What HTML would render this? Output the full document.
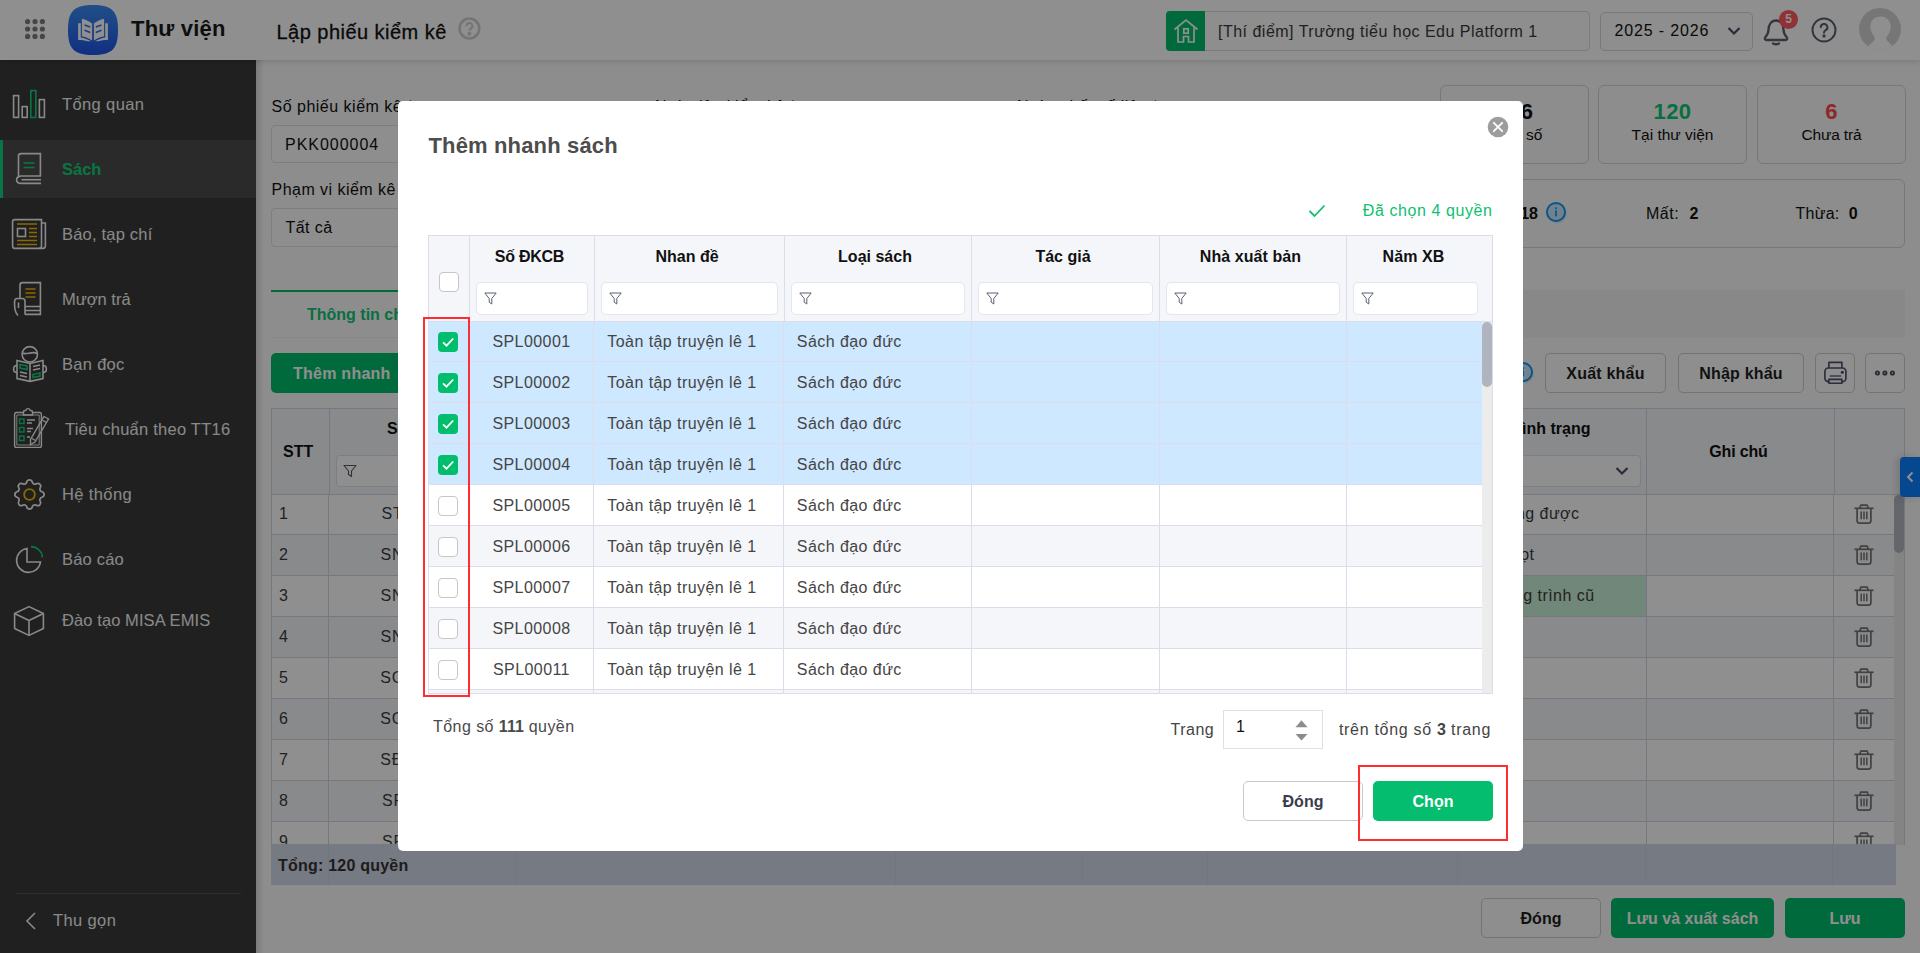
<!DOCTYPE html>
<html lang="vi">
<head>
<meta charset="utf-8">
<title>Lập phiếu kiểm kê</title>
<style>
*{box-sizing:border-box;margin:0;padding:0}
html,body{width:1920px;height:953px;overflow:hidden;background:#fff}
body{font-family:"Liberation Sans",sans-serif;font-size:16px;color:#1f1f1f;position:relative}
.abs{position:absolute}
.t{position:absolute;white-space:nowrap;line-height:20px;letter-spacing:.45px}
.b,.t b{font-weight:bold;letter-spacing:0}
#hdr{position:absolute;left:0;top:0;width:1920px;height:60px;background:#fff;box-shadow:0 2px 5px rgba(0,0,0,.12);z-index:3}
#side{position:absolute;left:0;top:60px;width:256px;height:893px;background:#3a3a3a;z-index:2}
#side .it{position:absolute;left:0;width:256px;height:58px}
#side .it.sel{background:#4c4c4c;box-shadow:inset 3px 0 0 #12d07a}
#side .lbl{position:absolute;left:62px;font-size:16.5px;color:#f4f4f4;white-space:nowrap;line-height:20px;letter-spacing:.38px}
#side svg{position:absolute}
#main{position:absolute;left:256px;top:60px;width:1664px;height:893px;background:#fbfbfb}
.inp{position:absolute;border:1px solid #e0e0e0;border-radius:4px;background:#fdfdfd}
.btn{position:absolute;border-radius:5px;text-align:center;font-weight:bold;font-size:16px;line-height:39px;height:40px;white-space:nowrap}
.btn.g{background:#03bd6d;color:#fff;line-height:41px}
.btn.w{background:#fdfdfd;border:1px solid #cdcdcd;color:#1f1f1f}
.mc{color:#454545}
#ov{position:absolute;left:0;top:0;width:1920px;height:953px;background:rgba(0,0,0,.44);z-index:10}
#modal{position:absolute;left:398px;top:101px;width:1124.500px;height:750px;background:#fff;border-radius:5px;z-index:20}
</style>
</head>
<body>
<div id="hdr"><svg class="abs" style="left:25px;top:19px" width="20" height="20" viewBox="0 0 20 20" fill="#7d7d7d"><circle cx="2.6" cy="2.6" r="2.600"/><circle cx="10" cy="2.6" r="2.600"/><circle cx="17.4" cy="2.6" r="2.600"/><circle cx="2.6" cy="10" r="2.600"/><circle cx="10" cy="10" r="2.600"/><circle cx="17.4" cy="10" r="2.600"/><circle cx="2.6" cy="17.4" r="2.600"/><circle cx="10" cy="17.4" r="2.600"/><circle cx="17.4" cy="17.4" r="2.600"/></svg><svg class="abs" style="left:68px;top:5px" width="50" height="50" viewBox="0 0 50 50"><defs><linearGradient id="lg" x1="0" y1="0" x2="0" y2="1"><stop offset="0" stop-color="#3a8df2"/><stop offset="1" stop-color="#1f55e6"/></linearGradient></defs><path d="M25 0C44 0 50 6 50 25C50 44 44 50 25 50C6 50 0 44 0 25C0 6 6 0 25 0Z" fill="url(#lg)"/><g fill="#fff"><path d="M13.900 13.800C18 14.500 21.500 16.500 24.100 18.600V35.600C21.500 33.500 18 32 13.900 31.200Z"/><path d="M36.100 13.800C32 14.500 28.500 16.500 25.900 18.600V35.600C28.500 33.500 32 32 36.100 31.200Z"/><path d="M10.100 18.300H12.800V32.400C16.500 33 20 34.200 23 36.300H19.500C17 35.400 14 35 10.100 35Z"/><path d="M39.900 18.300H37.200V32.400C33.500 33 30 34.200 27 36.300H30.500C33 35.400 36 35 39.900 35Z"/></g><g stroke="#2f74ea" stroke-width="1.700" stroke-linecap="round"><path d="M17.200 20.200L21.600 21.800M17.200 25.500L21.600 27.300M32.800 20.200L28.400 21.800M32.800 25.500L28.400 27.300"/></g></svg><div class="t b" id="h_app" style="left:131px;top:17px;font-size:22px;line-height:24px;color:#1a1a1a;letter-spacing:.2px">Thư viện</div><div class="t" id="h_title" style="left:276.500px;top:20.100px;letter-spacing:.47px;font-size:20px;line-height:24px;color:#111;-webkit-text-stroke:.3px #111">Lập phiếu kiểm kê</div><svg class="abs" style="left:457px;top:17px" width="24" height="24" viewBox="0 0 24 24" fill="none" stroke="#cfcfcf" stroke-width="2.500"><circle cx="12.400" cy="11.500" r="9.900"/><path d="M9.600 9a2.900 2.900 0 1 1 4.300 2.500c-.9.500-1.500 1.100-1.500 2.200" stroke-width="2"/><circle cx="12.400" cy="16.800" r=".7" fill="#cfcfcf"/></svg><div class="abs" style="left:1166px;top:11px;width:424px;height:40px;border:1px solid #dcdcdc;border-radius:4px;background:#fdfdfd"></div><div class="abs" style="left:1166px;top:11px;width:39px;height:40px;border-radius:4px 0 0 4px;background:#03bd6d"></div><svg class="abs" style="left:1172px;top:17px" width="28" height="28" viewBox="0 0 28 28" fill="none" stroke="#fff" stroke-width="1.700" stroke-linejoin="miter"><path d="M2.500 12.500L14 3L25.500 12.500"/><path d="M6 10.500V25H11.500V19.500H16.500V25H22V10.500"/><rect x="11.800" y="11.800" width="4.400" height="4.400"/></svg><div class="t" id="h_school" style="left:1218px;top:21.600px;letter-spacing:.49px;color:#3a3a3a">[Thí điểm] Trường tiểu học Edu Platform 1</div><div class="abs" style="left:1600px;top:12px;width:153px;height:39px;border:1px solid #d6d6d6;border-radius:5px;background:#fdfdfd"></div><div class="t" id="h_year" style="left:1614.500px;top:21.200px;letter-spacing:.86px;color:#111">2025 - 2026</div><svg class="abs" style="left:1727px;top:26px" width="14" height="10" viewBox="0 0 14 10" fill="none" stroke="#4a4f63" stroke-width="2.200"><path d="M1.500 2L7 7.500L12.500 2"/></svg><svg class="abs" style="left:1762px;top:17px" width="28" height="30" viewBox="0 0 28 30" fill="none" stroke="#5b6170" stroke-width="2.300" stroke-linecap="round" stroke-linejoin="round"><path d="M4.500 23C3 23 2.300 21.500 3.300 20.300C5.800 17.500 6.500 16 6.500 12.500C6.500 7.500 9.500 3.500 14 3.500C18.500 3.500 21.500 7.500 21.500 12.500C21.500 16 22.200 17.500 24.700 20.300C25.700 21.500 25 23 23.500 23Z"/><path d="M11 26.500Q14 28 17 26.500"/></svg><div class="abs" style="left:1779px;top:10px;width:19px;height:19px;border-radius:50%;background:#ff5a5f"></div><div class="t b" style="left:1779px;top:10px;width:19px;text-align:center;font-size:12px;line-height:19px;color:#fff">5</div><svg class="abs" style="left:1810px;top:16px" width="28" height="28" viewBox="0 0 28 28" fill="none" stroke="#5b6170" stroke-width="2"><circle cx="14" cy="14" r="11.500"/><path d="M10.800 11.300a3.300 3.300 0 1 1 4.900 2.900c-1 .6-1.700 1.300-1.700 2.500" stroke-linecap="round"/><circle cx="14" cy="20" r=".7" fill="#5b6170"/></svg><svg class="abs" style="left:1859px;top:8px" width="42" height="42" viewBox="0 0 42 42"><defs><clipPath id="av"><circle cx="21" cy="21" r="21"/></clipPath></defs><circle cx="21" cy="21" r="21" fill="#d2d2d2"/><g clip-path="url(#av)" fill="#fff"><path d="M21.500 8.400C28 8.400 31.800 13 31.800 18.600C31.800 23 29.500 26.500 27.500 29C27 30.500 27.500 32 29 33.500L34.500 39L36 44H7L8.500 39L14 33.500C15.500 32 16 30.500 15.500 29C13.500 26.500 11.300 23 11.300 18.600C11.300 13 15 8.400 21.500 8.400Z"/></g></svg></div>
<div id="side"><div class="it" style="top:15.5px"><svg style="left:12px;top:13px" width="34" height="30" viewBox="0 0 34 30" fill="none" stroke="#f4f4f4" stroke-width="1.600"><rect x="1.600" y="6.600" width="5" height="21.800"/><rect x="10.200" y="17.600" width="5" height="10.800"/><rect x="18.800" y="1.600" width="5" height="26.800" stroke="#12d07a"/><rect x="27.400" y="10.600" width="5" height="17.800"/></svg><div class="lbl" style="left:62px;top:18.5px;">Tổng quan</div></div><div class="it sel" style="top:80px"><svg style="left:15px;top:12px" width="28" height="34" viewBox="0 0 28 34" fill="none" stroke="#f4f4f4" stroke-width="1.600"><path d="M3.500 26V4C3.500 2.500 4.500 1.600 6 1.600H25.400V24H6.500C3 24 1.600 25.500 1.600 27.700C1.600 30 3 31.400 6.500 31.400H26"/><path d="M26 27.700H6.500"/><path d="M8.500 11H19.500M8.500 15.500H19.500" stroke="#12d07a"/></svg><div class="lbl" style="left:62px;top:19px;color:#12d07a;font-weight:bold;letter-spacing:0;">Sách</div></div><div class="it" style="top:145px"><svg style="left:11px;top:13px" width="36" height="32" viewBox="0 0 36 32" fill="none" stroke="#f4f4f4" stroke-width="1.600"><path d="M3.500 1.600H30.500V28C30.500 29.500 29.500 30.400 28 30.400H4C2.500 30.400 1.600 29.500 1.600 28V3.500C1.600 2.300 2.300 1.600 3.500 1.600Z"/><path d="M30.500 5H34.400V27.500C34.400 29.500 33.300 30.400 32 30.400H28"/><rect x="6.500" y="10.500" width="8" height="8"/><path d="M6 6H26M18 10.500H26M18 14.500H26M18 18.500H26M6 22.500H26M6 26.500H26" stroke="#f5bd00" stroke-width="1.500"/></svg><div class="lbl" style="left:62px;top:19px;letter-spacing:0.2px;">Báo, tạp chí</div></div><div class="it" style="top:210px"><svg style="left:13px;top:11px" width="30" height="36" viewBox="0 0 30 36" fill="none" stroke="#f4f4f4" stroke-width="1.600"><path d="M7 17V4C7 2.500 8 1.600 9.500 1.600H27.400V33.400H12"/><path d="M12 25.500H27.400M12 29.500H27.400"/><path d="M5 34.500C2.500 32 1.600 29 1.600 24V20.500C1.600 18.500 2.800 17.500 4.300 17.500H9.500C11.500 17.500 12 19 12 20.500V33.400"/><path d="M5.500 21.500V27"/><path d="M12.500 8H22.500M12.500 12H22.500M12.500 16H22.500" stroke="#f5bd00" stroke-width="1.500"/></svg><div class="lbl" style="left:62px;top:19px;letter-spacing:0px;">Mượn trả</div></div><div class="it" style="top:275px"><svg style="left:12px;top:10px" width="36" height="38" viewBox="0 0 36 38" fill="none" stroke="#f4f4f4" stroke-width="1.600"><circle cx="17.800" cy="9.300" r="7.700"/><path d="M10.500 8C14 10.500 20 5.500 25.300 8.500"/><path d="M5 15.500L18 18.500L31 15.500V33.500L18 36.400L5 33.500Z"/><path d="M18 18.500V36.400"/><path d="M5 20.500C2.500 20.500 1.600 22 1.600 24C1.600 26 2.500 27.500 5 27.500M31 20.500C33.500 20.500 34.400 22 34.400 24C34.400 26 33.500 27.500 31 27.500"/><path d="M8 19.500L15 21V24.500L8 23ZM21 29.500L28 28V31L21 32.500Z" stroke="#12d07a"/><path d="M8 27L15 28.500M8 30.500L15 32M21 21.500L28 20M21 25L28 23.500"/></svg><div class="lbl" style="left:62px;top:19px;letter-spacing:0.3px;">Bạn đọc</div></div><div class="it" style="top:340px"><svg style="left:13px;top:7px" width="38" height="42" viewBox="0 0 38 42" fill="none" stroke="#f4f4f4" stroke-width="1.400"><path d="M11 5.500H3.500C2.300 5.500 1.600 6.200 1.600 7.500V38.500C1.600 39.700 2.300 40.400 3.500 40.400H26.500C27.700 40.400 28.400 39.700 28.400 38.500V7.500C28.400 6.200 27.700 5.500 26.500 5.500H19"/><path d="M3.800 8H26.200V38H3.800Z" stroke-width=".9"/><path d="M10.500 8V5C10.500 4 11 3.500 12 3.500H12.800C13 2.300 13.800 1.600 15 1.600C16.200 1.600 17 2.300 17.200 3.500H18C19 3.500 19.500 4 19.500 5V8Z"/><rect x="6.500" y="12" width="4.500" height="4.500" stroke="#12d07a"/><rect x="6.500" y="20.500" width="4.500" height="4.500" stroke="#12d07a"/><rect x="6.500" y="29" width="4.500" height="4.500" stroke="#12d07a"/><path d="M14 13H22M14 16H19M14 21.500H20M14 24.500H18M14 30H17"/><path d="M31 9.500L35.500 12L22 35L17.500 37.500L17.500 32.500Z"/><path d="M29 13L33.500 15.500M19 31.500L22.500 33.500"/></svg><div class="lbl" style="left:65px;top:19px;letter-spacing:0.24px;">Tiêu chuẩn theo TT16</div></div><div class="it" style="top:405.5px"><svg style="left:9.500px;top:9.500px" width="39" height="39" viewBox="0 0 24 24" fill="none" stroke="#f4f4f4" stroke-width="1.050" stroke-linejoin="round"><path d="M10.325 4.317c.426-1.756 2.924-1.756 3.350 0a1.724 1.724 0 0 0 2.573 1.066c1.543-.94 3.310.826 2.370 2.370a1.724 1.724 0 0 0 1.065 2.572c1.756.426 1.756 2.924 0 3.350a1.724 1.724 0 0 0-1.066 2.573c.94 1.543-.826 3.310-2.370 2.370a1.724 1.724 0 0 0-2.572 1.065c-.426 1.756-2.924 1.756-3.350 0a1.724 1.724 0 0 0-2.573-1.066c-1.543.94-3.310-.826-2.370-2.370a1.724 1.724 0 0 0-1.065-2.572c-1.756-.426-1.756-2.924 0-3.350a1.724 1.724 0 0 0 1.066-2.573c-.94-1.543.826-3.310 2.370-2.370.996.608 2.296.070 2.572-1.065z"/><circle cx="12" cy="12" r="3.300" stroke="#f5bd00" stroke-width="1.100"/></svg><div class="lbl" style="left:62px;top:18px;">Hệ thống</div></div><div class="it" style="top:470.5px"><svg style="left:14px;top:14px" width="30" height="30" viewBox="0 0 30 30" fill="none" stroke="#f4f4f4" stroke-width="1.600"><path d="M13 3.500A12 12 0 1 0 26.500 17H13Z"/><path d="M17 1.600A11.500 11.500 0 0 1 28.400 12.500" stroke="#12d07a"/></svg><div class="lbl" style="left:62px;top:18px;letter-spacing:0.2px;">Báo cáo</div></div><div class="it" style="top:531.5px"><svg style="left:13px;top:13px" width="32" height="32" viewBox="0 0 32 32" fill="none" stroke="#f4f4f4" stroke-width="1.600" stroke-linejoin="round"><path d="M16 1.600L30.400 8.500V23.500L16 30.400L1.600 23.500V8.500Z"/><path d="M1.600 8.500L16 15.500L30.400 8.500M16 15.500V30.400"/></svg><div class="lbl" style="left:62px;top:18px;letter-spacing:0.09px;">Đào tạo MISA EMIS</div></div><div class="abs" style="left:15px;top:833px;width:226px;height:1px;background:#4a545c"></div><svg style="left:24px;top:851px" width="14" height="20" viewBox="0 0 14 20" fill="none" stroke="#f4f4f4" stroke-width="1.600"><path d="M11 2L3 10L11 18"/></svg><div class="lbl" style="left:53px;top:850px">Thu gọn</div></div>
<div id="main"><div class="abs" style="left:0;top:0;width:8px;height:893px;background:linear-gradient(90deg,rgba(0,0,0,.13),rgba(0,0,0,0))"></div><div class="t" id="m_l1" style="left:15.5px;top:37px;color:#111;letter-spacing:.5px">Số phiếu kiểm kê <span style="color:#e00">*</span></div><div class="inp" style="left:15px;top:64.5px;width:340px;height:38px"></div><div class="t" id="m_v1" style="left:29px;top:74.7px;color:#111;letter-spacing:.97px">PKK000004</div><div class="t" id="m_l2" style="left:15.5px;top:119.5px;color:#111;letter-spacing:.47px">Phạm vi kiểm kê</div><div class="inp" style="left:15px;top:147.5px;width:340px;height:39px"></div><div class="t" id="m_v2" style="left:29.5px;top:157.7px;color:#111;letter-spacing:.45px">Tất cả</div><div class="t" style="left:399px;top:37px;color:#111">Ngày lập kiểm kê <span style="color:#e00">*</span></div><div class="t" style="left:761px;top:37px;color:#111">Ngày chốt số liệu <span style="color:#e00">*</span></div><div class="inp" style="left:1184px;top:25px;width:149px;height:79px;background:transparent;border-color:#d4d4d4;border-radius:6px"></div><div class="t b" style="left:1184px;top:40.4px;width:149px;text-align:center;font-size:22px;line-height:24px;color:#111;letter-spacing:.5px">126</div><div class="t" style="left:1184px;top:65px;width:149px;text-align:center;font-size:15.500px;color:#111;letter-spacing:0px">Tổng số</div><div class="inp" style="left:1342px;top:25px;width:149px;height:79px;background:transparent;border-color:#d4d4d4;border-radius:6px"></div><div class="t b" style="left:1342px;top:40.4px;width:149px;text-align:center;font-size:22px;line-height:24px;color:#0fc775;letter-spacing:.5px">120</div><div class="t" style="left:1342px;top:65px;width:149px;text-align:center;font-size:15.500px;color:#111;letter-spacing:0px">Tại thư viện</div><div class="inp" style="left:1501px;top:25px;width:149px;height:79px;background:transparent;border-color:#d4d4d4;border-radius:6px"></div><div class="t b" style="left:1501px;top:40.4px;width:149px;text-align:center;font-size:22px;line-height:24px;color:#ff474c;letter-spacing:.5px">6</div><div class="t" style="left:1501px;top:65px;width:149px;text-align:center;font-size:15.500px;color:#111;letter-spacing:-0.15px">Chưa trả</div><div class="inp" style="left:1184px;top:119px;width:465px;height:69px;background:transparent;border-color:#d4d4d4;border-radius:6px"></div><div class="t" id="m_s1" style="right:382px;top:144px;color:#111">Hư hỏng: <b>18</b></div><svg class="abs" style="left:1290px;top:142.3px" width="22" height="22" viewBox="0 0 22 22"><circle cx="11.200" cy="11.800" r="9.500" fill="#5aa9e6" opacity=".22"/><circle cx="10" cy="10" r="9.050" fill="#c8e6ff" stroke="#0f96f0" stroke-width="1.900"/><rect x="9.200" y="8.400" width="1.700" height="6" fill="#0f96f0"/><rect x="9.200" y="5.300" width="1.700" height="1.800" fill="#0f96f0"/></svg><div class="t" id="m_s2" style="left:1390px;top:144px;color:#111;letter-spacing:.5px">Mất:</div><div class="t b" style="left:1433.5px;top:144px;color:#111;letter-spacing:.5px">2</div><div class="t" id="m_s3" style="left:1539.4px;top:144px;color:#111;letter-spacing:.3px">Thừa:</div><div class="t b" style="left:1592.8px;top:144px;color:#111;letter-spacing:.5px">0</div><div class="abs" style="left:15px;top:277px;width:1634px;height:1px;background:#f0f0f0"></div><div class="abs" style="left:264px;top:230px;width:1385px;height:47.500px;background:#f3f3f3"></div><div class="abs" style="left:15px;top:230px;width:249px;height:2px;background:#03bd6d"></div><div class="t b" id="m_tab" style="left:51px;top:245px;color:#0fc775">Thông tin chi tiết</div><div class="btn g" id="m_b1" style="left:15px;top:293px;width:180px;text-align:left;padding-left:22px;letter-spacing:.25px">Thêm nhanh</div><svg class="abs" style="left:1257.2px;top:301.7px" width="22" height="22" viewBox="0 0 22 22"><circle cx="11.200" cy="11.800" r="9.500" fill="#5aa9e6" opacity=".22"/><circle cx="10" cy="10" r="9.050" fill="#c8e6ff" stroke="#0f96f0" stroke-width="1.900"/><rect x="9.200" y="8.400" width="1.700" height="6" fill="#0f96f0"/><rect x="9.200" y="5.300" width="1.700" height="1.800" fill="#0f96f0"/></svg><div class="btn w" id="m_b2" style="left:1289px;top:293px;width:121px;letter-spacing:.2px">Xuất khẩu</div><div class="btn w" id="m_b3" style="left:1422px;top:293px;width:126px;letter-spacing:.2px">Nhập khẩu</div><div class="btn w" style="left:1559px;top:293px;width:40px"></div><svg class="abs" style="left:1567px;top:300.5px" width="25" height="25" viewBox="0 0 25 25" fill="none" stroke="#4d506e" stroke-width="1.650" stroke-linejoin="round"><path d="M5.900 7V1.400H18.900V7"/><rect x="1.900" y="7" width="21" height="13.600" rx="3.400"/><path d="M6.800 15H18.200" stroke-width="1.300"/><path d="M5.900 22.200V18.300H18.900V22.200Z" fill="#fbfbfb"/><circle cx="19.300" cy="11.300" r="1.500" fill="#45486a" stroke="none"/></svg><div class="btn w" style="left:1609px;top:293px;width:40px"></div><svg class="abs" style="left:1618px;top:308.9px" width="22" height="8" viewBox="0 0 22 8" fill="none" stroke="#4a4c5e" stroke-width="1.800"><circle cx="3.400" cy="4" r="1.650"/><circle cx="10.900" cy="4" r="1.650"/><circle cx="18.400" cy="4" r="1.650"/></svg><div class="abs" id="bgtbl" style="left:15px;top:348px;width:1634px;height:437px;overflow:hidden;border:1px solid #d2d4e3;border-bottom:none;background:#fff"><div class="abs" style="left:0;top:85px;width:1622px;height:41px;background:#fff;border-bottom:1px solid #d2d4e3"></div><div class="t" style="left:7px;top:94.5px;color:#3c3c3c">1</div><div class="t" style="left:57px;width:187px;text-align:center;top:94.5px;color:#3c3c3c;letter-spacing:.8px">STK00001</div><div class="t" style="right:324.5px;top:94.5px;color:#3c3c3c" id="st0">Sử dụng được</div><svg class="abs" style="left:1582px;top:94.8px" width="20" height="20" viewBox="0 0 20 20" fill="none" stroke="#767676" stroke-width="1.700" stroke-linejoin="round"><path d="M.400 4.300H19.600"/><path d="M5.800 4.300L6.800 1.100H13.200L14.200 4.300"/><path d="M3.100 4.300V16.400C3.100 18.300 4 19.100 5.700 19.100H14.300C16 19.100 16.900 18.300 16.900 16.400V4.300"/><path d="M7.200 7.600V15.200M10 7.600V15.200M12.800 7.600V15.200" stroke-width="1.500"/></svg><div class="abs" style="left:0;top:126px;width:1622px;height:41px;background:#f5f6fa;border-bottom:1px solid #d2d4e3"></div><div class="t" style="left:7px;top:135.5px;color:#3c3c3c">2</div><div class="t" style="left:57px;width:187px;text-align:center;top:135.5px;color:#3c3c3c;letter-spacing:.8px">SNV00001</div><div class="t" style="right:369.5px;top:135.5px;color:#3c3c3c" id="st1">Mối mọt</div><svg class="abs" style="left:1582px;top:135.8px" width="20" height="20" viewBox="0 0 20 20" fill="none" stroke="#767676" stroke-width="1.700" stroke-linejoin="round"><path d="M.400 4.300H19.600"/><path d="M5.800 4.300L6.800 1.100H13.200L14.200 4.300"/><path d="M3.100 4.300V16.400C3.100 18.300 4 19.100 5.700 19.100H14.300C16 19.100 16.900 18.300 16.900 16.400V4.300"/><path d="M7.200 7.600V15.200M10 7.600V15.200M12.800 7.600V15.200" stroke-width="1.500"/></svg><div class="abs" style="left:0;top:167px;width:1622px;height:41px;background:#fff;border-bottom:1px solid #d2d4e3"></div><div class="abs" style="left:1187px;top:167px;width:188px;height:40px;background:#c9f0d8"></div><div class="t" style="left:7px;top:176.5px;color:#3c3c3c">3</div><div class="t" style="left:57px;width:187px;text-align:center;top:176.5px;color:#3c3c3c;letter-spacing:.8px">SNV00002</div><div class="t" style="right:309.5px;top:176.5px;color:#3c3c3c" id="st2">Chương trình cũ</div><svg class="abs" style="left:1582px;top:176.8px" width="20" height="20" viewBox="0 0 20 20" fill="none" stroke="#767676" stroke-width="1.700" stroke-linejoin="round"><path d="M.400 4.300H19.600"/><path d="M5.800 4.300L6.800 1.100H13.200L14.200 4.300"/><path d="M3.100 4.300V16.400C3.100 18.300 4 19.100 5.700 19.100H14.300C16 19.100 16.900 18.300 16.900 16.400V4.300"/><path d="M7.200 7.600V15.200M10 7.600V15.200M12.800 7.600V15.200" stroke-width="1.500"/></svg><div class="abs" style="left:0;top:208px;width:1622px;height:41px;background:#f5f6fa;border-bottom:1px solid #d2d4e3"></div><div class="t" style="left:7px;top:217.5px;color:#3c3c3c">4</div><div class="t" style="left:57px;width:187px;text-align:center;top:217.5px;color:#3c3c3c;letter-spacing:.8px">SNV00003</div><svg class="abs" style="left:1582px;top:217.8px" width="20" height="20" viewBox="0 0 20 20" fill="none" stroke="#767676" stroke-width="1.700" stroke-linejoin="round"><path d="M.400 4.300H19.600"/><path d="M5.800 4.300L6.800 1.100H13.200L14.200 4.300"/><path d="M3.100 4.300V16.400C3.100 18.300 4 19.100 5.700 19.100H14.300C16 19.100 16.900 18.300 16.900 16.400V4.300"/><path d="M7.200 7.600V15.200M10 7.600V15.200M12.800 7.600V15.200" stroke-width="1.500"/></svg><div class="abs" style="left:0;top:249px;width:1622px;height:41px;background:#fff;border-bottom:1px solid #d2d4e3"></div><div class="t" style="left:7px;top:258.5px;color:#3c3c3c">5</div><div class="t" style="left:57px;width:187px;text-align:center;top:258.5px;color:#3c3c3c;letter-spacing:.8px">SGK00001</div><svg class="abs" style="left:1582px;top:258.8px" width="20" height="20" viewBox="0 0 20 20" fill="none" stroke="#767676" stroke-width="1.700" stroke-linejoin="round"><path d="M.400 4.300H19.600"/><path d="M5.800 4.300L6.800 1.100H13.200L14.200 4.300"/><path d="M3.100 4.300V16.400C3.100 18.300 4 19.100 5.700 19.100H14.300C16 19.100 16.900 18.300 16.900 16.400V4.300"/><path d="M7.200 7.600V15.200M10 7.600V15.200M12.800 7.600V15.200" stroke-width="1.500"/></svg><div class="abs" style="left:0;top:290px;width:1622px;height:41px;background:#f5f6fa;border-bottom:1px solid #d2d4e3"></div><div class="t" style="left:7px;top:299.5px;color:#3c3c3c">6</div><div class="t" style="left:57px;width:187px;text-align:center;top:299.5px;color:#3c3c3c;letter-spacing:.8px">SGK00002</div><svg class="abs" style="left:1582px;top:299.8px" width="20" height="20" viewBox="0 0 20 20" fill="none" stroke="#767676" stroke-width="1.700" stroke-linejoin="round"><path d="M.400 4.300H19.600"/><path d="M5.800 4.300L6.800 1.100H13.200L14.200 4.300"/><path d="M3.100 4.300V16.400C3.100 18.300 4 19.100 5.700 19.100H14.300C16 19.100 16.900 18.300 16.900 16.400V4.300"/><path d="M7.200 7.600V15.200M10 7.600V15.200M12.800 7.600V15.200" stroke-width="1.500"/></svg><div class="abs" style="left:0;top:331px;width:1622px;height:41px;background:#fff;border-bottom:1px solid #d2d4e3"></div><div class="t" style="left:7px;top:340.5px;color:#3c3c3c">7</div><div class="t" style="left:57px;width:187px;text-align:center;top:340.5px;color:#3c3c3c;letter-spacing:.8px">SĐĐ00001</div><svg class="abs" style="left:1582px;top:340.8px" width="20" height="20" viewBox="0 0 20 20" fill="none" stroke="#767676" stroke-width="1.700" stroke-linejoin="round"><path d="M.400 4.300H19.600"/><path d="M5.800 4.300L6.800 1.100H13.200L14.200 4.300"/><path d="M3.100 4.300V16.400C3.100 18.300 4 19.100 5.700 19.100H14.300C16 19.100 16.900 18.300 16.900 16.400V4.300"/><path d="M7.200 7.600V15.200M10 7.600V15.200M12.800 7.600V15.200" stroke-width="1.500"/></svg><div class="abs" style="left:0;top:372px;width:1622px;height:41px;background:#f5f6fa;border-bottom:1px solid #d2d4e3"></div><div class="t" style="left:7px;top:381.5px;color:#3c3c3c">8</div><div class="t" style="left:57px;width:187px;text-align:center;top:381.5px;color:#3c3c3c;letter-spacing:.8px">SPL00009</div><svg class="abs" style="left:1582px;top:381.8px" width="20" height="20" viewBox="0 0 20 20" fill="none" stroke="#767676" stroke-width="1.700" stroke-linejoin="round"><path d="M.400 4.300H19.600"/><path d="M5.800 4.300L6.800 1.100H13.200L14.200 4.300"/><path d="M3.100 4.300V16.400C3.100 18.300 4 19.100 5.700 19.100H14.300C16 19.100 16.900 18.300 16.900 16.400V4.300"/><path d="M7.200 7.600V15.200M10 7.600V15.200M12.800 7.600V15.200" stroke-width="1.500"/></svg><div class="abs" style="left:0;top:413px;width:1622px;height:41px;background:#fff;border-bottom:1px solid #d2d4e3"></div><div class="t" style="left:7px;top:422.5px;color:#3c3c3c">9</div><div class="t" style="left:57px;width:187px;text-align:center;top:422.5px;color:#3c3c3c;letter-spacing:.8px">SPL00010</div><svg class="abs" style="left:1582px;top:422.8px" width="20" height="20" viewBox="0 0 20 20" fill="none" stroke="#767676" stroke-width="1.700" stroke-linejoin="round"><path d="M.400 4.300H19.600"/><path d="M5.800 4.300L6.800 1.100H13.200L14.200 4.300"/><path d="M3.100 4.300V16.400C3.100 18.300 4 19.100 5.700 19.100H14.300C16 19.100 16.900 18.300 16.900 16.400V4.300"/><path d="M7.200 7.600V15.200M10 7.600V15.200M12.800 7.600V15.200" stroke-width="1.500"/></svg><div class="abs" style="left:0;top:454px;width:1622px;height:41px;background:#f5f6fa;border-bottom:1px solid #d2d4e3"></div><div class="t" style="left:7px;top:463.5px;color:#3c3c3c">10</div><div class="t" style="left:57px;width:187px;text-align:center;top:463.5px;color:#3c3c3c;letter-spacing:.8px">SPL00012</div><svg class="abs" style="left:1582px;top:463.8px" width="20" height="20" viewBox="0 0 20 20" fill="none" stroke="#767676" stroke-width="1.700" stroke-linejoin="round"><path d="M.400 4.300H19.600"/><path d="M5.800 4.300L6.800 1.100H13.200L14.200 4.300"/><path d="M3.100 4.300V16.400C3.100 18.300 4 19.100 5.700 19.100H14.300C16 19.100 16.900 18.300 16.900 16.400V4.300"/><path d="M7.200 7.600V15.200M10 7.600V15.200M12.800 7.600V15.200" stroke-width="1.500"/></svg><div class="abs" style="left:0;top:0;width:1634px;height:86px;background:#f5f6fa;border-bottom:1px solid #d2d4e3"></div><div class="abs" style="left:57px;top:0;width:1px;height:86px;background:#d2d4e3"></div><div class="abs" style="left:56px;top:86px;width:1px;height:400px;background:#d2d4e3"></div><div class="abs" style="left:244px;top:0;width:1px;height:86px;background:#d2d4e3"></div><div class="abs" style="left:243px;top:86px;width:1px;height:400px;background:#d2d4e3"></div><div class="abs" style="left:623px;top:0;width:1px;height:86px;background:#d2d4e3"></div><div class="abs" style="left:622px;top:86px;width:1px;height:400px;background:#d2d4e3"></div><div class="abs" style="left:811px;top:0;width:1px;height:86px;background:#d2d4e3"></div><div class="abs" style="left:810px;top:86px;width:1px;height:400px;background:#d2d4e3"></div><div class="abs" style="left:935px;top:0;width:1px;height:86px;background:#d2d4e3"></div><div class="abs" style="left:934px;top:86px;width:1px;height:400px;background:#d2d4e3"></div><div class="abs" style="left:1187px;top:0;width:1px;height:86px;background:#d2d4e3"></div><div class="abs" style="left:1186px;top:86px;width:1px;height:400px;background:#d2d4e3"></div><div class="abs" style="left:1374px;top:0;width:1px;height:86px;background:#d2d4e3"></div><div class="abs" style="left:1374px;top:86px;width:1px;height:400px;background:#d2d4e3"></div><div class="abs" style="left:1562px;top:0;width:1px;height:86px;background:#d2d4e3"></div><div class="abs" style="left:1561px;top:86px;width:1px;height:400px;background:#d2d4e3"></div><div class="t b" style="left:11px;top:32.5px;color:#111">STT</div><div class="t b" style="left:57px;width:187px;text-align:center;top:9.5px;color:#111">Số ĐKCB</div><div class="inp" style="left:64px;top:46px;width:174px;height:32px;border-color:#dfe0ea;background:#fff"></div><svg class="abs" style="left:71px;top:55px" width="14" height="14" viewBox="0 0 14 14" fill="none" stroke="#555a66" stroke-width="1.100" stroke-linejoin="round"><path d="M1 1.500H13L8.500 7V12.500L5.500 10.500V7Z"/></svg><div class="t b" id="bg_tt" style="right:313.5px;top:9.7px;color:#111">Tình trạng</div><div class="inp" style="left:1194px;top:46px;width:175px;height:32px;border-color:#dfe0ea;background:#fff"></div><svg class="abs" style="left:1343px;top:57px" width="14" height="10" viewBox="0 0 14 10" fill="none" stroke="#4a4f63" stroke-width="2.200"><path d="M1.500 2L7 7.500L12.500 2"/></svg><div class="t b" style="left:1372.5px;top:32.5px;width:188px;text-align:center;color:#111;letter-spacing:-.15px">Ghi chú</div><div class="abs" style="left:1622px;top:86px;width:11px;height:350px;background:#ececec"></div><div class="abs" style="left:1622.2px;top:86px;width:9.700px;height:58px;background:#b3b6bf;border-radius:5px"></div></div><div class="abs" style="left:15px;top:784px;width:1625px;height:41px;background:#d3daea"></div><div class="abs" style="left:72px;top:784px;width:1px;height:41px;background:#cdd3e3"></div><div class="abs" style="left:259px;top:784px;width:1px;height:41px;background:#cdd3e3"></div><div class="abs" style="left:639px;top:784px;width:1px;height:41px;background:#cdd3e3"></div><div class="abs" style="left:826px;top:784px;width:1px;height:41px;background:#cdd3e3"></div><div class="abs" style="left:951px;top:784px;width:1px;height:41px;background:#cdd3e3"></div><div class="abs" style="left:1201px;top:784px;width:1px;height:41px;background:#cdd3e3"></div><div class="abs" style="left:1389px;top:784px;width:1px;height:41px;background:#cdd3e3"></div><div class="abs" style="left:1576px;top:784px;width:1px;height:41px;background:#cdd3e3"></div><div class="t b" id="bg_tot" style="left:22px;top:795.8px;color:#333;letter-spacing:.22px">Tổng: 120 quyền</div><div class="btn w" id="m_f1" style="left:1225px;top:838px;width:120px">Đóng</div><div class="btn g" id="m_f2" style="left:1355px;top:838px;width:163px">Lưu và xuất sách</div><div class="btn g" id="m_f3" style="left:1529px;top:838px;width:120px">Lưu</div><div class="abs" style="left:1644px;top:397px;width:20px;height:40px;background:#0a80ff;border-radius:4px 0 0 4px;box-shadow:-3px 0 8px rgba(0,0,0,.15);z-index:3"></div><svg class="abs" style="left:1650px;top:411.2px;z-index:4" width="8" height="12" viewBox="0 0 8 12" fill="none" stroke="#fff" stroke-width="2"><path d="M6.500 1.500L2 6L6.500 10.500"/></svg></div>
<div id="ov"></div>
<div id="modal"><div class="t b" id="md_title" style="left:30.5px;top:31.3px;font-size:22px;line-height:28px;color:#4d4d4d;letter-spacing:.15px">Thêm nhanh sách</div><svg class="abs" style="left:1089px;top:15px" width="22" height="22" viewBox="0 0 22 22"><circle cx="11" cy="11" r="10.300" fill="#9d9d9d"/><path d="M6.800 6.800L15.200 15.200M15.200 6.800L6.800 15.200" stroke="#fff" stroke-width="1.800" stroke-linecap="round"/></svg><svg class="abs" style="left:910px;top:103px" width="18" height="14" viewBox="0 0 18 14" fill="none" stroke="#10bf6f" stroke-width="1.800"><path d="M1.500 7L6.500 12L16.500 1.500"/></svg><div class="t" id="md_sel" style="right:30px;top:99.8px;color:#10bf6f;letter-spacing:.58px">Đã chọn 4 quyền</div><div class="abs" id="mtbl" style="left:30px;top:134px;width:1065px;height:459px;border:1px solid #dcddeb;overflow:hidden;background:#fff"><div class="abs" style="left:0;top:85px;width:1053px;height:41px;background:#cde8ff;border-bottom:1px solid #dcddeb"></div><div class="abs" style="left:9px;top:96px;width:20px;height:20px;border-radius:4px;background:#00be6e"></div><svg class="abs" style="left:9px;top:96px" width="20" height="20" viewBox="0 0 20 20" fill="none" stroke="#fff" stroke-width="1.800"><path d="M5 10.300L8.500 13.700L15.200 6.500"/></svg><div class="t mc" style="left:40px;width:125px;text-align:center;top:95.5px;letter-spacing:.42px">SPL00001</div><div class="t mc mn" style="left:178.3px;top:95.5px;letter-spacing:.44px">Toàn tập truyện lê 1</div><div class="t mc ml" style="left:367.8px;top:95.5px;letter-spacing:.44px">Sách đạo đức</div><div class="abs" style="left:0;top:126px;width:1053px;height:41px;background:#cde8ff;border-bottom:1px solid #dcddeb"></div><div class="abs" style="left:9px;top:137px;width:20px;height:20px;border-radius:4px;background:#00be6e"></div><svg class="abs" style="left:9px;top:137px" width="20" height="20" viewBox="0 0 20 20" fill="none" stroke="#fff" stroke-width="1.800"><path d="M5 10.300L8.500 13.700L15.200 6.500"/></svg><div class="t mc" style="left:40px;width:125px;text-align:center;top:136.5px;letter-spacing:.42px">SPL00002</div><div class="t mc mn" style="left:178.3px;top:136.5px;letter-spacing:.44px">Toàn tập truyện lê 1</div><div class="t mc ml" style="left:367.8px;top:136.5px;letter-spacing:.44px">Sách đạo đức</div><div class="abs" style="left:0;top:167px;width:1053px;height:41px;background:#cde8ff;border-bottom:1px solid #dcddeb"></div><div class="abs" style="left:9px;top:178px;width:20px;height:20px;border-radius:4px;background:#00be6e"></div><svg class="abs" style="left:9px;top:178px" width="20" height="20" viewBox="0 0 20 20" fill="none" stroke="#fff" stroke-width="1.800"><path d="M5 10.300L8.500 13.700L15.200 6.500"/></svg><div class="t mc" style="left:40px;width:125px;text-align:center;top:177.5px;letter-spacing:.42px">SPL00003</div><div class="t mc mn" style="left:178.3px;top:177.5px;letter-spacing:.44px">Toàn tập truyện lê 1</div><div class="t mc ml" style="left:367.8px;top:177.5px;letter-spacing:.44px">Sách đạo đức</div><div class="abs" style="left:0;top:208px;width:1053px;height:41px;background:#cde8ff;border-bottom:1px solid #dcddeb"></div><div class="abs" style="left:9px;top:219px;width:20px;height:20px;border-radius:4px;background:#00be6e"></div><svg class="abs" style="left:9px;top:219px" width="20" height="20" viewBox="0 0 20 20" fill="none" stroke="#fff" stroke-width="1.800"><path d="M5 10.300L8.500 13.700L15.200 6.500"/></svg><div class="t mc" style="left:40px;width:125px;text-align:center;top:218.5px;letter-spacing:.42px">SPL00004</div><div class="t mc mn" style="left:178.3px;top:218.5px;letter-spacing:.44px">Toàn tập truyện lê 1</div><div class="t mc ml" style="left:367.8px;top:218.5px;letter-spacing:.44px">Sách đạo đức</div><div class="abs" style="left:0;top:249px;width:1053px;height:41px;background:#fff;border-bottom:1px solid #dcddeb"></div><div class="abs" style="left:9px;top:260px;width:20px;height:20px;border:1px solid #c6c6c6;border-radius:4px;background:#fff"></div><div class="t mc" style="left:40px;width:125px;text-align:center;top:259.5px;letter-spacing:.42px">SPL00005</div><div class="t mc mn" style="left:178.3px;top:259.5px;letter-spacing:.44px">Toàn tập truyện lê 1</div><div class="t mc ml" style="left:367.8px;top:259.5px;letter-spacing:.44px">Sách đạo đức</div><div class="abs" style="left:0;top:290px;width:1053px;height:41px;background:#f5f6fa;border-bottom:1px solid #dcddeb"></div><div class="abs" style="left:9px;top:301px;width:20px;height:20px;border:1px solid #c6c6c6;border-radius:4px;background:#fff"></div><div class="t mc" style="left:40px;width:125px;text-align:center;top:300.5px;letter-spacing:.42px">SPL00006</div><div class="t mc mn" style="left:178.3px;top:300.5px;letter-spacing:.44px">Toàn tập truyện lê 1</div><div class="t mc ml" style="left:367.8px;top:300.5px;letter-spacing:.44px">Sách đạo đức</div><div class="abs" style="left:0;top:331px;width:1053px;height:41px;background:#fff;border-bottom:1px solid #dcddeb"></div><div class="abs" style="left:9px;top:342px;width:20px;height:20px;border:1px solid #c6c6c6;border-radius:4px;background:#fff"></div><div class="t mc" style="left:40px;width:125px;text-align:center;top:341.5px;letter-spacing:.42px">SPL00007</div><div class="t mc mn" style="left:178.3px;top:341.5px;letter-spacing:.44px">Toàn tập truyện lê 1</div><div class="t mc ml" style="left:367.8px;top:341.5px;letter-spacing:.44px">Sách đạo đức</div><div class="abs" style="left:0;top:372px;width:1053px;height:41px;background:#f5f6fa;border-bottom:1px solid #dcddeb"></div><div class="abs" style="left:9px;top:383px;width:20px;height:20px;border:1px solid #c6c6c6;border-radius:4px;background:#fff"></div><div class="t mc" style="left:40px;width:125px;text-align:center;top:382.5px;letter-spacing:.42px">SPL00008</div><div class="t mc mn" style="left:178.3px;top:382.5px;letter-spacing:.44px">Toàn tập truyện lê 1</div><div class="t mc ml" style="left:367.8px;top:382.5px;letter-spacing:.44px">Sách đạo đức</div><div class="abs" style="left:0;top:413px;width:1053px;height:41px;background:#fff;border-bottom:1px solid #dcddeb"></div><div class="abs" style="left:9px;top:424px;width:20px;height:20px;border:1px solid #c6c6c6;border-radius:4px;background:#fff"></div><div class="t mc" style="left:40px;width:125px;text-align:center;top:423.5px;letter-spacing:.42px">SPL00011</div><div class="t mc mn" style="left:178.3px;top:423.5px;letter-spacing:.44px">Toàn tập truyện lê 1</div><div class="t mc ml" style="left:367.8px;top:423.5px;letter-spacing:.44px">Sách đạo đức</div><div class="abs" style="left:0;top:454px;width:1053px;height:41px;background:#f5f6fa;border-bottom:1px solid #dcddeb"></div><div class="abs" style="left:9px;top:465px;width:20px;height:20px;border:1px solid #c6c6c6;border-radius:4px;background:#fff"></div><div class="t mc" style="left:40px;width:125px;text-align:center;top:464.5px;letter-spacing:.42px">SPL00012</div><div class="t mc mn" style="left:178.3px;top:464.5px;letter-spacing:.44px">Toàn tập truyện lê 1</div><div class="t mc ml" style="left:367.8px;top:464.5px;letter-spacing:.44px">Sách đạo đức</div><div class="abs" style="left:0;top:0;width:1063px;height:86px;background:#f5f6fa;border-bottom:1px solid #dcddeb"></div><div class="t b" id="mh0" style="left:38px;width:125px;text-align:center;top:10.7px;color:#111;letter-spacing:-0.25px">Số ĐKCB</div><div class="t b" id="mh1" style="left:163px;width:190px;text-align:center;top:10.7px;color:#111;letter-spacing:0px">Nhan đề</div><div class="t b" id="mh2" style="left:352.5px;width:187px;text-align:center;top:10.7px;color:#111;letter-spacing:0px">Loại sách</div><div class="t b" id="mh3" style="left:540px;width:188px;text-align:center;top:10.7px;color:#111;letter-spacing:0px">Tác giả</div><div class="t b" id="mh4" style="left:728px;width:187px;text-align:center;top:10.7px;color:#111;letter-spacing:0.08px">Nhà xuất bản</div><div class="t b" id="mh5" style="left:916.5px;width:136px;text-align:center;top:10.7px;color:#111;letter-spacing:0.1px">Năm XB</div><div class="inp" style="left:47px;top:46px;width:112px;height:33px;border-color:#e4e5ee;background:#fff;border-radius:5px"></div><svg class="abs" style="left:54.5px;top:56.3px" width="13" height="13" viewBox="0 0 13 13" fill="none" stroke="#5b5f72" stroke-width="1" stroke-linejoin="round"><path d="M.800 1H12.200L7.800 6.500V12L5.200 10.200V6.500Z"/></svg><div class="inp" style="left:172px;top:46px;width:177px;height:33px;border-color:#e4e5ee;background:#fff;border-radius:5px"></div><svg class="abs" style="left:179.5px;top:56.3px" width="13" height="13" viewBox="0 0 13 13" fill="none" stroke="#5b5f72" stroke-width="1" stroke-linejoin="round"><path d="M.800 1H12.200L7.800 6.500V12L5.200 10.200V6.500Z"/></svg><div class="inp" style="left:362px;top:46px;width:174px;height:33px;border-color:#e4e5ee;background:#fff;border-radius:5px"></div><svg class="abs" style="left:369.5px;top:56.3px" width="13" height="13" viewBox="0 0 13 13" fill="none" stroke="#5b5f72" stroke-width="1" stroke-linejoin="round"><path d="M.800 1H12.200L7.800 6.500V12L5.200 10.200V6.500Z"/></svg><div class="inp" style="left:549px;top:46px;width:175px;height:33px;border-color:#e4e5ee;background:#fff;border-radius:5px"></div><svg class="abs" style="left:556.5px;top:56.3px" width="13" height="13" viewBox="0 0 13 13" fill="none" stroke="#5b5f72" stroke-width="1" stroke-linejoin="round"><path d="M.800 1H12.200L7.800 6.500V12L5.200 10.200V6.500Z"/></svg><div class="inp" style="left:737px;top:46px;width:174px;height:33px;border-color:#e4e5ee;background:#fff;border-radius:5px"></div><svg class="abs" style="left:744.5px;top:56.3px" width="13" height="13" viewBox="0 0 13 13" fill="none" stroke="#5b5f72" stroke-width="1" stroke-linejoin="round"><path d="M.800 1H12.200L7.800 6.500V12L5.200 10.200V6.500Z"/></svg><div class="inp" style="left:924px;top:46px;width:125px;height:33px;border-color:#e4e5ee;background:#fff;border-radius:5px"></div><svg class="abs" style="left:931.5px;top:56.3px" width="13" height="13" viewBox="0 0 13 13" fill="none" stroke="#5b5f72" stroke-width="1" stroke-linejoin="round"><path d="M.800 1H12.200L7.800 6.500V12L5.200 10.200V6.500Z"/></svg><div class="abs" style="left:10px;top:36px;width:20px;height:20px;border:1px solid #c6c6c6;border-radius:4px;background:#fff"></div><div class="abs" style="left:40px;top:0;width:1px;height:86px;background:#dcddeb"></div><div class="abs" style="left:40px;top:86px;width:1px;height:400px;background:#dcddeb"></div><div class="abs" style="left:165px;top:0;width:1px;height:86px;background:#dcddeb"></div><div class="abs" style="left:164px;top:86px;width:1px;height:400px;background:#dcddeb"></div><div class="abs" style="left:355px;top:0;width:1px;height:86px;background:#dcddeb"></div><div class="abs" style="left:354px;top:86px;width:1px;height:400px;background:#dcddeb"></div><div class="abs" style="left:542px;top:0;width:1px;height:86px;background:#dcddeb"></div><div class="abs" style="left:542px;top:86px;width:1px;height:400px;background:#dcddeb"></div><div class="abs" style="left:730px;top:0;width:1px;height:86px;background:#dcddeb"></div><div class="abs" style="left:730px;top:86px;width:1px;height:400px;background:#dcddeb"></div><div class="abs" style="left:917px;top:0;width:1px;height:86px;background:#dcddeb"></div><div class="abs" style="left:917px;top:86px;width:1px;height:400px;background:#dcddeb"></div><div class="abs" style="left:1053px;top:86px;width:11px;height:372px;background:#ececec"></div><div class="abs" style="left:1053px;top:86px;width:10px;height:65px;background:#b0b4be;border-radius:5px"></div></div><div class="t" id="md_tot" style="left:35px;top:616.2px;color:#4a4a4a">Tổng số <b>111</b> quyền</div><div class="t" id="md_trang" style="left:772.5px;top:619px;color:#444;letter-spacing:.5px">Trang</div><div class="abs" style="left:825px;top:609px;width:100px;height:39px;border:1px solid #e0e0e0;background:#fff"></div><div class="t" style="left:838px;top:615.7px;color:#111">1</div><svg class="abs" style="left:897px;top:619px" width="13" height="21" viewBox="0 0 13 21" fill="#8c8c8c"><path d="M6.500 .300L12.500 7.300H.500Z"/><path d="M.500 14L12.500 14L6.500 20.500Z"/></svg><div class="t" id="md_pg" style="right:31.5px;top:619px;color:#444;letter-spacing:.7px">trên tổng số <b>3</b> trang</div><div class="btn w" id="md_b1" style="left:845px;top:680px;width:120px;border-color:#c9c9c9;color:#3b3d4d;background:#fff">Đóng</div><div class="btn g" id="md_b2" style="left:975px;top:680px;width:120px;background:#05bd6e">Chọn</div><div class="abs" style="left:25px;top:216px;width:47px;height:379.500px;border:2px solid #ff2d30"></div><div class="abs" style="left:960px;top:664px;width:150px;height:75.500px;border:2px solid #ff2d30"></div></div>
</body>
</html>
